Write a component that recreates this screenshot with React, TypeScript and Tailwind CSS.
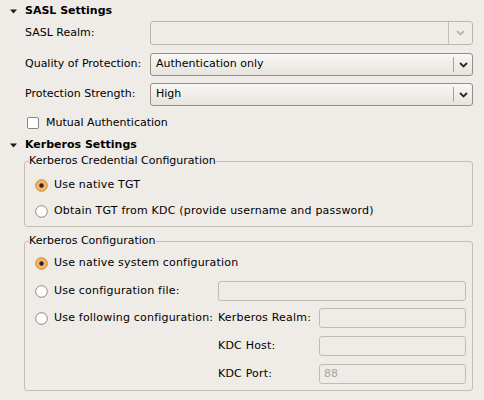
import React from 'react';

const font = { fontFamily: '"DejaVu Sans", Verdana, sans-serif' };

const Triangle = () => (
    <svg width="7" height="5" viewBox="0 0 7 5" className="shrink-0">
        <path d="M0 0.5 L7 0.5 L3.5 4.5 Z" fill="#1c1c1c" />
    </svg>
);

const SectionHeading = ({ title, className = '' }: { title: string; className?: string }) => (
    <div className={`flex items-center pl-[10px] pt-[2px] ${className}`}>
        <Triangle />
        <span className="ml-[8px] font-bold">{title}</span>
    </div>
);

const Chevron = ({ color }: { color: string }) => (
    <svg width="9" height="6" viewBox="0 0 9 6">
        <path d="M1 1 L4.5 4.5 L8 1" fill="none" stroke={color} strokeWidth="1.8" />
    </svg>
);

interface ComboProps {
    value?: string;
    disabled?: boolean;
}

const Combo = ({ value, disabled }: ComboProps) =>
    disabled ? (
        <div className="flex-1 h-full flex rounded-[3px] border border-[#bcb5ab] bg-[#f0ede9]">
            <div className="flex-1" />
            <div className="w-[24px] border-l border-[#c6bfb6] flex items-center justify-center">
                <Chevron color="#b9b3ab" />
            </div>
        </div>
    ) : (
        <div className="flex-1 h-full flex items-center rounded-[3px] border border-[#948f87] bg-gradient-to-b from-[#f9f8f6] to-[#e7e3de]">
            <span className="flex-1 pl-[5px]">{value}</span>
            <div className="h-[15px] border-l border-[#a7a199]" />
            <div className="w-[18px] flex items-center justify-center">
                <Chevron color="#2a2a2a" />
            </div>
        </div>
    );

const FormRow = ({ label, children, className = '' }: { label: string; children: React.ReactNode; className?: string }) => (
    <div className={`flex items-center ${className}`}>
        <span className="w-[125px] shrink-0">{label}</span>
        {children}
    </div>
);

const Radio = ({ checked }: { checked?: boolean }) => (
    <svg width="13" height="13" viewBox="0 0 13 13" className="shrink-0">
        {checked ? (
            <>
                <circle cx="6.5" cy="6.5" r="5.8" fill="#f6b465" stroke="#c98a3c" strokeWidth="1" />
                <circle cx="6.5" cy="6.5" r="2.2" fill="#2a2622" />
            </>
        ) : (
            <circle cx="6.5" cy="6.5" r="5.8" fill="#ffffff" stroke="#8e8982" strokeWidth="1" />
        )}
    </svg>
);

const RadioLabel = ({ label, checked }: { label: string; checked?: boolean }) => (
    <div className="flex items-center gap-[6px]">
        <Radio checked={checked} />
        <span className="tracking-[0.2px]">{label}</span>
    </div>
);

const TextField = ({ placeholder }: { placeholder?: string }) => (
    <div className="flex-1 h-[20px] rounded-[3px] border border-[#c3bbb0] bg-[#efebe7] flex items-center pl-[4px] text-[#aaa49c]">
        {placeholder}
    </div>
);

const GroupBox = ({ title, children, className = '' }: { title: string; children: React.ReactNode; className?: string }) => (
    <fieldset className={`ml-[24px] w-[449px] rounded-[3px] border border-[#c5beb3] ${className}`}>
        <legend className="ml-[4px] leading-[16px]">{title}</legend>
        {children}
    </fieldset>
);

export default function App() {
    return (
        <div className="w-[484px] h-[400px] overflow-hidden bg-[#efebe7] text-[11px] text-black" style={font}>
            <SectionHeading title="SASL Settings" className="h-[20px]" />
            <div className="pl-[25px] pr-[11px]">
                <FormRow label="SASL Realm:" className="mt-[1px] h-[24px]">
                    <Combo disabled />
                </FormRow>
                <FormRow label="Quality of Protection:" className="mt-[8px] h-[23px]">
                    <Combo value="Authentication only" />
                </FormRow>
                <FormRow label="Protection Strength:" className="mt-[7px] h-[23px]">
                    <Combo value="High" />
                </FormRow>
                <div className="mt-[7px] h-[20px] flex items-center pl-[2px] gap-[7px]">
                    <div className="w-[12px] h-[12px] rounded-[2px] border border-[#8b8680] bg-white" />
                    <span>Mutual Authentication</span>
                </div>
            </div>
            <SectionHeading title="Kerberos Settings" className="mt-[2px] h-[18px]" />
            <GroupBox title="Kerberos Credential Configuration">
                <div className="pl-[10px] pt-[6px] pb-[5px] flex flex-col gap-[6px]">
                    <div className="h-[20px] flex items-center">
                        <RadioLabel label="Use native TGT" checked />
                    </div>
                    <div className="h-[20px] flex items-center">
                        <RadioLabel label="Obtain TGT from KDC (provide username and password)" />
                    </div>
                </div>
            </GroupBox>
            <GroupBox title="Kerberos Configuration" className="mt-[6px]">
                <div className="pl-[10px] pr-[6px] pt-[4px] pb-[6px]">
                    <div className="h-[20px] flex items-center">
                        <RadioLabel label="Use native system configuration" checked />
                    </div>
                    <div className="mt-[8px] h-[20px] flex items-center">
                        <div className="w-[183px] shrink-0">
                            <RadioLabel label="Use configuration file:" />
                        </div>
                        <TextField />
                    </div>
                    <div className="mt-[7px] h-[20px] flex items-center">
                        <div className="w-[183px] shrink-0">
                            <RadioLabel label="Use following configuration:" />
                        </div>
                        <span className="w-[101px] shrink-0 tracking-[0.2px]">Kerberos Realm:</span>
                        <TextField />
                    </div>
                    <div className="mt-[8px] h-[20px] flex items-center">
                        <div className="w-[183px] shrink-0" />
                        <span className="w-[101px] shrink-0 tracking-[0.2px]">KDC Host:</span>
                        <TextField />
                    </div>
                    <div className="mt-[8px] h-[20px] flex items-center">
                        <div className="w-[183px] shrink-0" />
                        <span className="w-[101px] shrink-0 tracking-[0.2px]">KDC Port:</span>
                        <TextField placeholder="88" />
                    </div>
                </div>
            </GroupBox>
        </div>
    );
}
